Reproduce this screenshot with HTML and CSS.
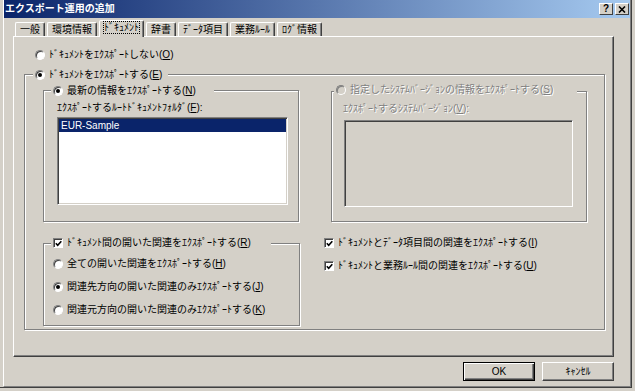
FILE: index.html
```html
<!DOCTYPE html>
<html lang="ja">
<head>
<meta charset="UTF-8" />
<title>エクスポート運用の追加</title>
<link rel="stylesheet" href="styles.css">
</head>
<body>
<div class="window">
  <div class="frame">
    <div class="titlebar">
      <span class="title">エクスポート運用の追加</span>
      <div class="title-btns">
        <span class="tbtn">?</span>
        <span class="tbtn"><svg width="8" height="7" viewBox="0 0 8 7"><path d="M1 0.5 L7 6.5 M7 0.5 L1 6.5" stroke="#000" stroke-width="1.6"/></svg></span>
      </div>
    </div>

    <div class="tabs">
      <span class="tab">一般</span>
      <span class="tab">環境情報</span>
      <span class="tab active"><span class="focus">ﾄﾞｷｭﾒﾝﾄ</span></span>
      <span class="tab">辞書</span>
      <span class="tab">ﾃﾞｰﾀ項目</span>
      <span class="tab">業務ﾙｰﾙ</span>
      <span class="tab">ﾛｸﾞ情報</span>
    </div>

    <div class="panel">
      <div class="opt first"><span class="radio"></span><span>ﾄﾞｷｭﾒﾝﾄをｴｸｽﾎﾟｰﾄしない(<u>O</u>)</span></div>

      <fieldset class="group outer">
        <legend><span class="opt"><span class="radio on"></span><span>ﾄﾞｷｭﾒﾝﾄをｴｸｽﾎﾟｰﾄする(<u>E</u>)</span></span></legend>
        <div class="outer-body">
          <div class="top-row">
            <fieldset class="group sub">
              <legend><span class="opt"><span class="radio on"></span><span>最新の情報をｴｸｽﾎﾟｰﾄする(<u>N</u>)</span></span></legend>
              <div class="sub-body">
                <div class="caption">ｴｸｽﾎﾟｰﾄするﾙｰﾄﾄﾞｷｭﾒﾝﾄﾌｫﾙﾀﾞ(<u>F</u>):</div>
                <div class="listbox">
                  <div class="item sel">EUR-Sample</div>
                </div>
              </div>
            </fieldset>

            <fieldset class="group sub disabled">
              <legend><span class="opt"><span class="radio"></span><span>指定したｼｽﾃﾑﾊﾞｰｼﾞｮﾝの情報をｴｸｽﾎﾟｰﾄする(<u>S</u>)</span></span></legend>
              <div class="sub-body">
                <div class="caption">ｴｸｽﾎﾟｰﾄするｼｽﾃﾑﾊﾞｰｼﾞｮﾝ(<u>V</u>):</div>
                <div class="listbox"></div>
              </div>
            </fieldset>
          </div>

          <div class="bottom-row">
            <fieldset class="group links">
              <legend><span class="opt"><span class="check"><svg width="7" height="7" viewBox="0 0 7 7"><path d="M0.8 3.2 L2.7 5.2 L6.3 1.2" fill="none" stroke="#000" stroke-width="1.6"/></svg></span><span>ﾄﾞｷｭﾒﾝﾄ間の開いた関連をｴｸｽﾎﾟｰﾄする(<u>R</u>)</span></span></legend>
              <div class="links-body">
                <div class="opt"><span class="radio"></span><span>全ての開いた関連をｴｸｽﾎﾟｰﾄする(<u>H</u>)</span></div>
                <div class="opt"><span class="radio on"></span><span>関連先方向の開いた関連のみｴｸｽﾎﾟｰﾄする(<u>J</u>)</span></div>
                <div class="opt"><span class="radio"></span><span>関連元方向の開いた関連のみｴｸｽﾎﾟｰﾄする(<u>K</u>)</span></div>
              </div>
            </fieldset>

            <div class="checks">
              <div class="opt"><span class="check"><svg width="7" height="7" viewBox="0 0 7 7"><path d="M0.8 3.2 L2.7 5.2 L6.3 1.2" fill="none" stroke="#000" stroke-width="1.6"/></svg></span><span>ﾄﾞｷｭﾒﾝﾄとﾃﾞｰﾀ項目間の関連をｴｸｽﾎﾟｰﾄする(<u>I</u>)</span></div>
              <div class="opt"><span class="check"><svg width="7" height="7" viewBox="0 0 7 7"><path d="M0.8 3.2 L2.7 5.2 L6.3 1.2" fill="none" stroke="#000" stroke-width="1.6"/></svg></span><span>ﾄﾞｷｭﾒﾝﾄと業務ﾙｰﾙ間の関連をｴｸｽﾎﾟｰﾄする(<u>U</u>)</span></div>
            </div>
          </div>
        </div>
      </fieldset>
    </div>

    <div class="buttons">
      <button class="btn default">OK</button>
      <button class="btn">ｷｬﾝｾﾙ</button>
    </div>
  </div>
</div>
</body>
</html>
```

FILE: styles.css
```css
* {
    box-sizing: border-box;
}

body {
    margin: 0;
    background: #d4d0c8;
    font-family: "Liberation Sans", "Noto Sans CJK JP", sans-serif;
    font-size: 10px;
    line-height: 12px;
    color: #000;
}

.window {
    width: 632px;
    height: 388px;
    padding-left: 3px;
    border-right: 1px solid #404040;
    border-bottom: 1px solid #404040;
}

.frame {
    height: 100%;
    border-left: 1px solid #fff;
    border-right: 1px solid #808080;
    border-bottom: 1px solid #808080;
}

/* title bar */
.titlebar {
    height: 18px;
    display: flex;
    align-items: center;
    justify-content: space-between;
    padding: 0 1px 0 1px;
    background: linear-gradient(to right, #0a246a, #a6caf0);
}

.title {
    color: #fff;
    font-weight: bold;
    font-size: 10px;
}

.title-btns {
    display: flex;
    gap: 2px;
}

.tbtn {
    width: 14px;
    height: 12px;
    display: flex;
    align-items: center;
    justify-content: center;
    background: #d4d0c8;
    border: 1px solid;
    border-color: #fff #404040 #404040 #fff;
    font-size: 10px;
    font-weight: bold;
    line-height: 10px;
}

/* tabs */
.tabs {
    height: 18px;
    display: flex;
    align-items: flex-end;
    gap: 2px;
    margin-left: 11px;
}

.tab {
    height: 14px;
    padding: 1px 4px 0;
    border: 1px solid;
    border-bottom: none;
    border-color: #fff #404040 transparent #fff;
    border-radius: 2px 2px 0 0;
    box-shadow: inset -1px 0 #808080;
    white-space: nowrap;
}

.tab.active {
    position: relative;
    z-index: 1;
    height: 17px;
    margin-bottom: -1px;
    padding-top: 1px;
    background: #d4d0c8;
}

.focus {
    outline: 1px dotted #000;
}

/* page */
.panel {
    margin-left: 9px;
    width: 601px;
    height: 321px;
    border: 1px solid;
    border-color: #fff #404040 #404040 #fff;
    box-shadow: inset -1px -1px #808080;
    padding: 12px 0 0 10px;
}

.opt {
    display: flex;
    align-items: center;
    gap: 4px;
    height: 12px;
    white-space: nowrap;
}

.opt.first {
    margin-left: 11px;
}

legend .opt {
    display: inline-flex;
}

.radio {
    flex: none;
    width: 10px;
    height: 10px;
    display: inline-flex;
    align-items: center;
    justify-content: center;
    border-radius: 50%;
    background: #fff;
    border: 1px solid;
    border-color: #808080 #fff #fff #808080;
    box-shadow: inset 1px 1px #404040;
}

.radio.on::after {
    content: "";
    width: 4px;
    height: 4px;
    border-radius: 50%;
    background: #000;
}

.check {
    flex: none;
    width: 10px;
    height: 10px;
    display: inline-flex;
    align-items: center;
    justify-content: center;
    background: #fff;
    border: 1px solid;
    border-color: #808080 #fff #fff #808080;
    box-shadow: inset 1px 1px #404040;
    padding: 1px 0 0 1px;
}

.check svg {
    display: block;
}

/* group boxes */
.group {
    margin: 0;
    padding: 0;
    min-width: 0;
    border: 1px solid #808080;
    box-shadow: 1px 1px 0 #fff, inset 1px 1px 0 #fff;
}

.group legend {
    padding: 0 2px;
    line-height: 12px;
    background: #d4d0c8;
}

.outer {
    width: 581px;
    margin-top: 7px;
}

.outer > legend {
    margin-left: 8px;
    padding-right: 6px;
}

.outer-body {
    padding: 3px 17px 3px 18px;
}

.top-row {
    display: flex;
    gap: 32px;
}

.sub {
    width: 256px;
}

.sub > legend {
    margin-left: 7px;
    padding-right: 18px;
}

.sub-body {
    padding: 5px 10px 14px 13px;
}

.caption {
    white-space: nowrap;
}

.listbox {
    margin-top: 3px;
    width: 231px;
    height: 88px;
    padding: 1px;
    background: #fff;
    border: 1px solid;
    border-color: #808080 #fff #fff #808080;
    box-shadow: inset 1px 1px #404040, inset -1px -1px #d4d0c8;
}

.item {
    height: 13px;
    line-height: 13px;
    padding-left: 2px;
}

.item.sel {
    background: #0a246a;
    color: #fff;
}

.disabled {
    color: #808080;
}

.disabled .opt,
.disabled .caption {
    text-shadow: 1px 1px 0 #fff;
}

.disabled > legend {
    margin-left: 2px;
    padding-right: 24px;
}

.disabled .radio {
    background: #d4d0c8;
    box-shadow: inset 1px 1px #808080;
}

.disabled .sub-body {
    padding-left: 11px;
}

.disabled .listbox {
    margin: 5px 0 0 1px;
    width: 229px;
    height: 87px;
    background: #d4d0c8;
}

.bottom-row {
    display: flex;
    gap: 24px;
    margin-top: 15px;
}

.links {
    width: 257px;
}

.links > legend {
    margin-left: 7px;
    padding-right: 20px;
}

.links-body {
    display: flex;
    flex-direction: column;
    gap: 11px;
    padding: 8px 0 9px 9px;
}

.checks {
    display: flex;
    flex-direction: column;
    gap: 11px;
}

/* dialog buttons */
.buttons {
    display: flex;
    justify-content: flex-end;
    gap: 7px;
    margin: 5px 16px 0 0;
}

.btn {
    width: 72px;
    height: 19px;
    padding: 0;
    font: inherit;
    color: #000;
    background: #d4d0c8;
    border: 1px solid;
    border-color: #fff #404040 #404040 #fff;
    box-shadow: inset -1px -1px #808080;
}

.btn.default {
    border-color: #000;
    box-shadow: inset 1px 1px #fff, inset -1px -1px #404040, inset -2px -2px #808080;
}
```
